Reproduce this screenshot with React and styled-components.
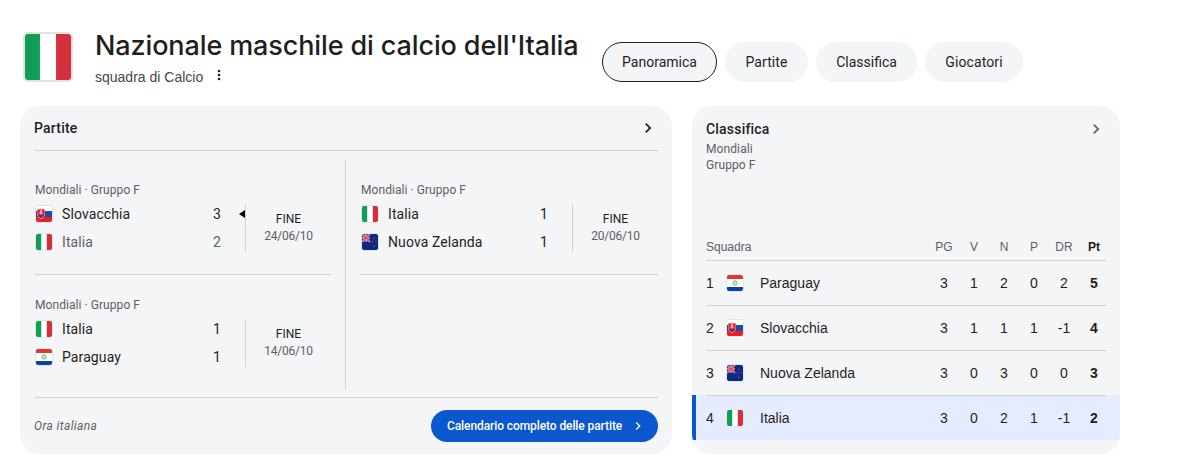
import styled, { createGlobalStyle } from "styled-components"

const GlobalStyle = createGlobalStyle`
  * { box-sizing: border-box; }
  body { margin: 0; background: #fff; color: #1f1f1f; font-family: "Liberation Sans", Arial, sans-serif; }
  button { font: inherit; border: 0; padding: 0; margin: 0; background: none; color: inherit; }
`;

const tabs = [
  { name: "Panoramica", width: 115, spacing: 0 },
  { name: "Partite", width: 83, spacing: 0.1 },
  { name: "Classifica", width: 101, spacing: 0 },
  { name: "Giocatori", width: 98, spacing: 0.1 },
];

const matches = [
  { date: "24/06/10", teams: [["sk", "Slovacchia", 3], ["it", "Italia", 2]], winner: 0 },
  { date: "20/06/10", teams: [["it", "Italia", 1], ["nz", "Nuova Zelanda", 1]] },
  { date: "14/06/10", teams: [["it", "Italia", 1], ["py", "Paraguay", 1]] },
];

const standings = [
  ["py", "Paraguay", [3, 1, 2, 0, 2, 5]],
  ["sk", "Slovacchia", [3, 1, 1, 1, -1, 4]],
  ["nz", "Nuova Zelanda", [3, 0, 3, 0, 0, 3]],
  ["it", "Italia", [3, 0, 2, 1, -1, 2]],
];

const flags = {
  it: (
    <>
      <path fill="#fff" d="M0 0h16v16H0z" />
      <path fill="#109d55" d="M0 0h5.200v16H0z" />
      <path fill="#d32f3d" d="M10.800 0H16v16h-5.200z" />
    </>
  ),
  sk: (
    <>
      <path fill="#fff" d="M0 0h16v5H0z" />
      <path fill="#1450a8" d="M0 5h16v6H0z" />
      <path fill="#ee1c25" d="M0 11h16v5H0z" />
      <path fill="#f6c9cf" d="M1 3h8v5c0 2.600-2 4-4 5-2-1-4-2.400-4-5z" />
      <path fill="#ee1c25" d="M1.400 3.400h7.200V8c0 2.300-1.800 3.500-3.600 4.400C3.200 11.500 1.400 10.300 1.400 8z" />
      <path fill="#1450a8" d="M2.300 10q2.700-2 5.400 0L5 12.200z" />
      <path stroke="#fff" strokeWidth="0.800" d="M5 4.200v4.300M3.900 5.200h2.200M3.400 7h3.200" />
    </>
  ),
  nz: (
    <>
      <path fill="#0b2a80" d="M0 0h16v16H0z" />
      <path stroke="#fff" strokeWidth="1.400" d="M0 0l8 8M8 0L0 8" />
      <path stroke="#e0344a" strokeWidth="0.800" d="M0 0l8 8M8 0L0 8" />
      <path stroke="#fff" strokeWidth="2.200" d="M4 0v8M0 4h8" />
      <path stroke="#e0344a" strokeWidth="1.400" d="M4 0v8M0 4h8" />
      <g fill="#9c4a7c">
        <circle cx="12" cy="4.500" r="0.700" />
        <circle cx="10.500" cy="8" r="0.700" />
        <circle cx="14" cy="7.300" r="0.700" />
        <circle cx="12" cy="12" r="0.800" />
      </g>
    </>
  ),
  py: (
    <>
      <path fill="#fff" d="M0 0h16v16H0z" />
      <path fill="#dc3a2f" d="M0 0h16v4H0z" />
      <path fill="#0a3fae" d="M0 12h16v4H0z" />
      <circle cx="8" cy="8" r="2.200" fill="#e5efd9" stroke="#7fa184" strokeWidth="0.900" />
      <circle cx="8" cy="8" r="0.700" fill="#b7bd72" />
    </>
  ),
};

const Flag = ({ code }) => (
  <FlagBox viewBox="0 0 16 16" preserveAspectRatio="none">{flags[code]}</FlagBox>
);

const Chevron = ({ size }) => (
  <svg width={size} height={size} viewBox="0 0 24 24" fill="currentColor">
    <path d="M8.590 16.590L13.170 12 8.590 7.410 10 6l6 6-6 6z" />
  </svg>
);

const Match = ({ match, last }) => (
  <MatchCell $last={last}>
    <League>Mondiali · Gruppo F</League>
    <MatchBody>
      <Teams>
        {match.teams.map(([code, name, score], i) => (
          <Team key={name} $lost={match.winner === 0 && i === 1}>
            <Flag code={code} />
            <TeamName>{name}</TeamName>
            <Score>{score}</Score>
            <Marker>{match.winner === i && <svg width="6" height="8"><path d="M6 0v8L0 4z" /></svg>}</Marker>
          </Team>
        ))}
      </Teams>
      <Result>
        <span>FINE</span>
        <MatchDate>{match.date}</MatchDate>
      </Result>
    </MatchBody>
  </MatchCell>
);

const App = () => (
  <>
    <GlobalStyle />
    <Header>
      <Logo><Flag code="it" /></Logo>
      <Heading>
        <Title>Nazionale maschile di calcio dell'Italia</Title>
        <Subtitle>
          squadra di Calcio
          <svg width="4" height="12" fill="#1f1f1f">
            <circle cx="2" cy="2" r="1.300" />
            <circle cx="2" cy="6" r="1.300" />
            <circle cx="2" cy="10" r="1.300" />
          </svg>
        </Subtitle>
      </Heading>
      <Tabs>
        {tabs.map((tab, i) => (
          <Tab key={tab.name} $active={i === 0} $width={tab.width} $spacing={tab.spacing}>{tab.name}</Tab>
        ))}
      </Tabs>
    </Header>
    <Content>
      <Card $width={652}>
        <MatchesHeader>
          <CardTitle>Partite</CardTitle>
          <Chevron size={20} />
        </MatchesHeader>
        <MatchGrid>
          <Match match={matches[0]} />
          <Divider />
          <Match match={matches[1]} />
          <Match match={matches[2]} last />
        </MatchGrid>
        <MatchesFooter>
          <Timezone>Ora italiana</Timezone>
          <CalendarButton>
            Calendario completo delle partite
            <Chevron size={16} />
          </CalendarButton>
        </MatchesFooter>
      </Card>
      <Card $width={428}>
        <StandingsHeader>
          <div>
            <CardTitle>Classifica</CardTitle>
            <Group>Mondiali</Group>
            <Group>Gruppo F</Group>
          </div>
          <Chevron size={20} />
        </StandingsHeader>
        <TableHead>
          <Squad>Squadra</Squad>
          {["PG", "V", "N", "P", "DR", "Pt"].map((label) => <Cell key={label}>{label}</Cell>)}
        </TableHead>
        {standings.map(([code, name, values], i) => (
          <Row key={code} $current={i === 3}>
            <RowInner>
              <Rank>{i + 1}</Rank>
              <Flag code={code} />
              <RowName>{name}</RowName>
              {values.map((value, j) => <Cell key={j}>{value}</Cell>)}
            </RowInner>
          </Row>
        ))}
      </Card>
    </Content>
  </>
)

export default App

const FlagBox = styled.svg`
  flex: none;
  width: 18px;
  height: 18px;
  border: 1px solid #e2e4e6;
  border-radius: 3px;
`;

const Header = styled.header`
  display: flex;
  height: 106px;
  padding-left: 23px;
`;

const Logo = styled.div`
  width: 50px;
  height: 50px;
  margin-top: 32px;

  ${FlagBox} {
    width: 50px;
    height: 50px;
    border: 2px solid #e2e2e2;
    border-radius: 5px;
  }
`;

const Heading = styled.div`
  width: 507px;
  margin-left: 22px;
  padding-top: 28px;
  white-space: nowrap;
`;

const Title = styled.h1`
  margin: 0;
  font: 500 27px/36px "Inter", sans-serif;
  letter-spacing: -0.120px;
`;

const Subtitle = styled.div`
  display: flex;
  align-items: center;
  gap: 14px;
  height: 23px;
  padding-top: 3px;
  font-size: 14px;
  color: #474747;

  svg { margin-top: -4px; }
`;

const Tabs = styled.nav`
  display: flex;
  gap: 8px;
  padding-top: 42px;
`;

const Tab = styled.button`
  width: ${(props) => props.$width}px;
  height: 40px;
  border-radius: 20px;
  border: ${(props) => props.$active ? "1px solid #1f1f1f" : "0"};
  background: #f3f5f6;
  font: 400 14px/20px "Roboto", sans-serif;
  letter-spacing: ${(props) => props.$spacing}px;
`;

const Content = styled.main`
  display: flex;
  gap: 20px;
  padding-left: 20px;
`;

const Card = styled.section`
  width: ${(props) => props.$width}px;
  height: 348px;
  border-radius: 20px;
  overflow: hidden;
  background: #f3f5f6;
`;

const CardTitle = styled.h2`
  margin: 0;
  font: 500 14px/20px "Roboto", sans-serif;
  letter-spacing: 0.200px;
`;

const MatchesHeader = styled.div`
  display: flex;
  justify-content: space-between;
  align-items: center;
  height: 45px;
  margin: 0 14px;
  border-bottom: 1px solid #d0d2d4;
`;

const MatchGrid = styled.div`
  display: grid;
  grid-template-columns: 297px 1px 298px;
  grid-template-rows: 115px 115px;
  column-gap: 14px;
  padding: 9px 14px 7px;
`;

const Divider = styled.div`
  grid-row: span 2;
  height: 229px;
  background: #d0d2d4;
`;

const MatchCell = styled.article`
  padding-top: 22px;
  border-bottom: ${(props) => props.$last ? "0" : "1px solid #d0d2d4"};
`;

const League = styled.div`
  padding-left: 1px;
  font: 400 12px/16px "Roboto", sans-serif;
  color: #5e6064;
  letter-spacing: 0.060px;
`;

const MatchBody = styled.div`
  display: flex;
  align-items: center;
  padding-top: 2px;
`;

const Teams = styled.div`
  flex: 1;
`;

const Team = styled.div`
  display: flex;
  align-items: center;
  height: 28px;
  padding-left: 1px;
  font: 400 14px/20px "Roboto", sans-serif;
  letter-spacing: 0.100px;
  color: ${(props) => props.$lost ? "#5e6064" : "#1f1f1f"};
`;

const TeamName = styled.span`
  flex: 1;
  margin-left: 9px;
`;

const Score = styled.span`
  width: 16px;
  text-align: center;
`;

const Marker = styled.span`
  display: flex;
  justify-content: flex-end;
  width: 20px;
`;

const Result = styled.div`
  display: flex;
  flex-direction: column;
  justify-content: center;
  width: 86px;
  height: 48px;
  border-left: 1px solid #d0d2d4;
  text-align: center;
  font: 400 12px/17px "Roboto", sans-serif;
`;

const MatchDate = styled.span`
  color: #5e6064;
  letter-spacing: -0.250px;
`;

const MatchesFooter = styled.div`
  display: flex;
  justify-content: space-between;
  align-items: center;
  height: 57px;
  margin: 0 14px;
  border-top: 1px solid #d0d2d4;
`;

const Timezone = styled.span`
  font: italic 400 12px/16px "Roboto", sans-serif;
  letter-spacing: 0.380px;
  color: #5e6064;
`;

const CalendarButton = styled.button`
  display: flex;
  justify-content: space-between;
  align-items: center;
  width: 227px;
  height: 32px;
  padding: 0 12px 0 16px;
  border-radius: 16px;
  background: #0b57d0;
  color: #fff;
  font: 500 12px/16px "Roboto", sans-serif;
  letter-spacing: -0.090px;
`;

const StandingsHeader = styled.div`
  display: flex;
  justify-content: space-between;
  height: 126px;
  padding: 13px 14px 0;

  svg { color: #5e6064; }
  h2 { margin-bottom: 2px; }
`;

const Group = styled.div`
  font: 400 12px/16px "Roboto", sans-serif;
  letter-spacing: 0.100px;
  color: #5e6064;
`;

const TableHead = styled.div`
  display: flex;
  align-items: center;
  height: 28px;
  margin: 0 14px;
  padding-top: 1px;
  font-size: 12px;
  color: #5e6064;
`;

const Squad = styled.span`
  flex: 1;
`;

const Cell = styled.span`
  width: 30px;
  text-align: center;

  &:last-child {
    margin-right: -3px;
    font-weight: 700;
    color: #1f1f1f;
  }
`;

const Row = styled.div`
  height: 45px;
  padding: 0 14px 0 10px;
  border-left: 4px solid ${(props) => props.$current ? "#0b57d0" : "transparent"};
  background: ${(props) => props.$current ? "#e6ecff" : "transparent"};
`;

const RowInner = styled.div`
  display: flex;
  align-items: center;
  height: 45px;
  border-top: 1px solid #d0d2d4;
  font-size: 14px;
`;

const Rank = styled.span`
  width: 20px;
`;

const RowName = styled.span`
  flex: 1;
  margin-left: 16px;
`;
